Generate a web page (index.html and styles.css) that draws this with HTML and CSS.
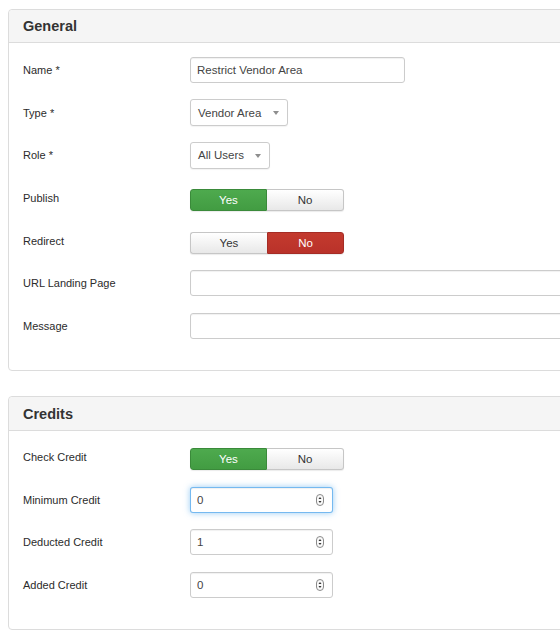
FILE: index.html
```html
<!DOCTYPE html>
<html>
<head>
<meta charset="utf-8">
<link rel="stylesheet" href="styles.css">
</head>
<body>
<div class="page">
  <section class="panel">
    <div class="panel-head">General</div>
    <div class="panel-body">
      <div class="row"><label class="lbl">Name *</label><div class="ctl"><div class="input w-name">Restrict Vendor Area</div></div></div>
      <div class="row"><label class="lbl">Type *</label><div class="ctl"><div class="select w-type">Vendor Area<span class="caret"></span></div></div></div>
      <div class="row"><label class="lbl">Role *</label><div class="ctl"><div class="select w-role">All Users<span class="caret"></span></div></div></div>
      <div class="row"><label class="lbl">Publish</label><div class="ctl"><div class="toggle"><span class="tbtn yes-on">Yes</span><span class="tbtn off">No</span></div></div></div>
      <div class="row"><label class="lbl">Redirect</label><div class="ctl"><div class="toggle"><span class="tbtn off">Yes</span><span class="tbtn no-on">No</span></div></div></div>
      <div class="row"><label class="lbl">URL Landing Page</label><div class="ctl"><div class="input w-wide"></div></div></div>
      <div class="row"><label class="lbl">Message</label><div class="ctl"><div class="input w-wide"></div></div></div>
    </div>
  </section>
  <section class="panel panel-second">
    <div class="panel-head head-second">Credits</div>
    <div class="panel-body">
      <div class="row"><label class="lbl">Check Credit</label><div class="ctl"><div class="toggle"><span class="tbtn yes-on">Yes</span><span class="tbtn off">No</span></div></div></div>
      <div class="row"><label class="lbl">Minimum Credit</label><div class="ctl"><div class="input num focus">0<svg class="spin" viewBox="0 0 8 12" width="8" height="12"><rect x="0.5" y="0.5" width="7" height="11" rx="3.5" fill="#fafafa" stroke="#8a8a8a"/><path d="M2.5 5 L4 3 L5.5 5 Z M2.5 7 L4 9 L5.5 7 Z" fill="#333"/></svg></div></div></div>
      <div class="row"><label class="lbl">Deducted Credit</label><div class="ctl"><div class="input num">1<svg class="spin" viewBox="0 0 8 12" width="8" height="12"><rect x="0.5" y="0.5" width="7" height="11" rx="3.5" fill="#fafafa" stroke="#8a8a8a"/><path d="M2.5 5 L4 3 L5.5 5 Z M2.5 7 L4 9 L5.5 7 Z" fill="#333"/></svg></div></div></div>
      <div class="row"><label class="lbl">Added Credit</label><div class="ctl"><div class="input num">0<svg class="spin" viewBox="0 0 8 12" width="8" height="12"><rect x="0.5" y="0.5" width="7" height="11" rx="3.5" fill="#fafafa" stroke="#8a8a8a"/><path d="M2.5 5 L4 3 L5.5 5 Z M2.5 7 L4 9 L5.5 7 Z" fill="#333"/></svg></div></div></div>
    </div>
  </section>
</div>
</body>
</html>
```
FILE: styles.css
```css
html, body {
  margin: 0;
  padding: 0;
  background: #fff;
  overflow: hidden;
}
body {
  font-family: "Liberation Sans", Arial, sans-serif;
  color: #333;
}
.page {
  padding: 9px 0 0 8px;
  width: 700px;
}
.panel {
  width: 640px;
  border: 1px solid #dcdcdc;
  border-radius: 4px;
  background: #fff;
}
.panel-second {
  margin-top: 25px;
}
.panel-head {
  height: 32px;
  line-height: 32px;
  padding-left: 14px;
  background: #f5f5f5;
  border-bottom: 1px solid #dcdcdc;
  border-radius: 4px 4px 0 0;
  font-size: 14.5px;
  font-weight: bold;
  color: #333;
}
.head-second {
  height: 33px;
  line-height: 34px;
}
.panel-body {
  padding: 14px 14px 31px 14px;
  display: flex;
  flex-direction: column;
  gap: 16.67px;
}
.head-second + .panel-body {
  padding-top: 13px;
}
.row {
  display: flex;
  align-items: center;
  height: 26px;
}
.lbl {
  width: 167px;
  flex: none;
  font-size: 11px;
  color: #2b2b2b;
}
.ctl {
  display: flex;
  align-items: center;
}
.input, .select {
  box-sizing: border-box;
  height: 26px;
  border: 1px solid #cccccc;
  border-radius: 3px;
  box-shadow: inset 0 1px 1px rgba(0,0,0,0.06);
  background: #fff;
  font-size: 11.5px;
  color: #444;
  padding: 0 6px;
  display: flex;
  align-items: center;
}
.w-name { width: 215px; }
.w-wide { width: 420px; }
.select {
  box-shadow: 0 1px 1px rgba(0,0,0,0.05);
  padding: 0 8px 0 7px;
  justify-content: space-between;
}
.w-type { width: 98px; height: 27px; }
.w-role { width: 80px; height: 27px; }
.caret {
  width: 0;
  height: 0;
  border-left: 3.5px solid transparent;
  border-right: 3.5px solid transparent;
  border-top: 4px solid #8e8e8e;
  margin-top: 1px;
}
.num {
  width: 143px;
  justify-content: space-between;
  padding-right: 8px;
}
.focus {
  border-color: rgba(82,168,236,0.8);
  box-shadow: inset 0 1px 1px rgba(0,0,0,0.06), 0 0 6px rgba(82,168,236,0.6);
}
.spin {
  display: block;
}
.toggle {
  display: flex;
  margin-top: 5px;
  height: 22px;
  border-radius: 3px;
  box-shadow: 0 1px 1px rgba(0,0,0,0.08);
}
.tbtn {
  box-sizing: border-box;
  height: 22px;
  font-size: 11.5px;
  display: flex;
  align-items: center;
  justify-content: center;
}
.tbtn:first-child {
  width: 77px;
  border-radius: 3px 0 0 3px;
}
.tbtn:last-child {
  width: 77px;
  border-radius: 0 3px 3px 0;
}
.off {
  background: linear-gradient(#ffffff, #e8e8e8);
  border: 1px solid #c6c6c6;
  color: #333;
}
.toggle .off:first-child { border-right: none; }
.toggle .off:last-child { border-left: none; }
.yes-on {
  background: linear-gradient(#4eaa4e, #429c42);
  border: 1px solid #3a8a3a;
  color: #fff;
}
.no-on {
  background: linear-gradient(#c33a2e, #b9322a);
  border: 1px solid #a52c25;
  color: #fff;
}
```
